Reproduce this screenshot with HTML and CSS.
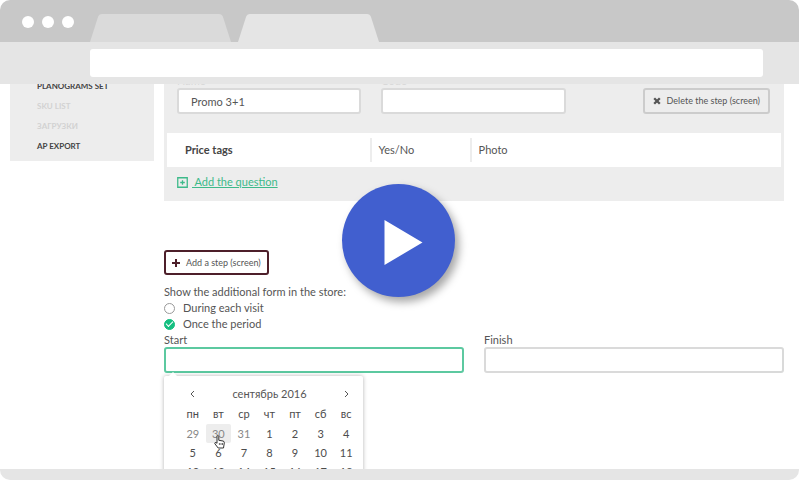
FILE: index.html
```html
<!DOCTYPE html>
<html lang="en">
<head>
<meta charset="utf-8">
<title>Step editor</title>
<link rel="stylesheet" href="styles.css">
</head>
<body>
<div class="window">
  <header class="titlebar">
    <div class="dots"><span></span><span></span><span></span></div>
    <svg class="tab tab-back" viewBox="0 0 142 28" aria-hidden="true"><path d="M0 28 L8 3 Q9 0 12 0 H129 Q132 0 133 3 L141 28Z"/></svg>
    <svg class="tab" viewBox="0 0 142 28" aria-hidden="true"><path d="M0 28 L8 3 Q9 0 12 0 H129 Q132 0 133 3 L141 28Z"/></svg>
  </header>
  <div class="toolbar"><input class="address" type="text" aria-label="Address"></div>

  <div class="viewport">
    <div class="page">
      <nav class="sidebar">
        <a href="#planograms">PLANOGRAMS SET</a>
        <a href="#sku" class="muted">SKU LIST</a>
        <a href="#uploads" class="muted">ЗАГРУЗКИ</a>
        <a href="#export">AP EXPORT</a>
      </nav>

      <main class="main">
        <section class="panel">
          <div class="step-row">
            <div class="step-field">
              <label for="name">Name</label>
              <input class="box" id="name" type="text" value="Promo 3+1">
            </div>
            <div class="step-field">
              <label for="code">Code</label>
              <input class="box" id="code" type="text">
            </div>
            <button class="delete" type="button">
              <svg width="8" height="8" viewBox="0 0 8 8" aria-hidden="true"><path d="M1.2 1.2 6.8 6.8M6.8 1.2 1.2 6.8" stroke="currentColor" stroke-width="2.3"/></svg>
              Delete the step (screen)
            </button>
          </div>
          <table class="questions">
            <tr>
              <th scope="row">Price tags</th>
              <td class="kind"><span>Yes/No</span></td>
              <td><span>Photo</span></td>
            </tr>
          </table>
          <a class="add-question" href="#add">
            <svg width="11" height="11" viewBox="0 0 11 11" aria-hidden="true"><path d="M.75 .75H10.25V10.25H.75ZM5.5 3.2V7.8M3.2 5.5H7.8" fill="none" stroke="currentColor" stroke-width="1.3"/></svg>
            <span>&nbsp;Add the question</span>
          </a>
        </section>

        <button class="add-step" type="button">
          <svg width="8" height="8" viewBox="0 0 8 8" aria-hidden="true"><path d="M4 0V8M0 4H8" stroke="currentColor" stroke-width="2"/></svg>
          Add a step (screen)
        </button>

        <fieldset class="schedule">
          <legend>Show the additional form in the store:</legend>
          <label class="option"><input type="radio" name="when">During each visit</label>
          <label class="option"><input type="radio" name="when" checked>Once the period</label>
        </fieldset>

        <div class="dates">
          <div class="date-field">
            <label for="start">Start</label>
            <input class="box active" id="start" type="text">
            <div class="calendar">
              <div class="month">
                <button type="button" aria-label="Previous month"><svg width="5" height="8" viewBox="0 0 5 8"><path d="M4 1 1 4 4 7" fill="none" stroke="currentColor"/></svg></button>
                <span>сентябрь 2016</span>
                <button type="button" aria-label="Next month"><svg width="5" height="8" viewBox="0 0 5 8"><path d="M1 1 4 4 1 7" fill="none" stroke="currentColor"/></svg></button>
              </div>
              <table class="days">
                <thead><tr><th>пн</th><th>вт</th><th>ср</th><th>чт</th><th>пт</th><th>сб</th><th>вс</th></tr></thead>
                <tbody>
                  <tr><td class="other">29</td><td class="other hover">30<svg class="hand" width="11" height="14" viewBox="0 0 11 14" aria-hidden="true"><path d="M3 8.3V1.6Q3 .6 3.9 .6T4.8 1.6V5.3L9 6Q10.4 6.3 10.3 7.8L9.5 13H4.2L.9 8.8Q.4 7.9 1.2 7.5T3 8.3Z" fill="#fff" stroke="#333"/><path d="M5.4 8V10M7 8V10M8.5 8V10" stroke="#444" stroke-width=".8"/></svg></td><td class="other">31</td><td>1</td><td>2</td><td>3</td><td>4</td></tr>
                  <tr><td>5</td><td>6</td><td>7</td><td>8</td><td>9</td><td>10</td><td>11</td></tr>
                  <tr><td>12</td><td>13</td><td>14</td><td>15</td><td>16</td><td>17</td><td>18</td></tr>
                </tbody>
              </table>
            </div>
          </div>
          <div class="date-field">
            <label for="finish">Finish</label>
            <input class="box" id="finish" type="text">
          </div>
        </div>
      </main>
    </div>
  </div>
  <footer class="bottom"></footer>

  <button class="play" type="button" aria-label="Play video">
    <svg viewBox="0 0 113 113" aria-hidden="true"><path d="M42.5 36 80.5 58.5 42.5 81Z" fill="#fff"/></svg>
  </button>
</div>
</body>
</html>
```
FILE: styles.css
```css
* { box-sizing: border-box; }

body {
  margin: 0;
  background: #fff;
  color: #555;
  font: 11px/16px Lato, "Liberation Sans", sans-serif;
}

input, button { font: inherit; color: inherit; margin: 0; }
a { color: inherit; text-decoration: none; }
svg { display: block; }

.window {
  position: relative;
  display: flex;
  flex-direction: column;
  height: 100vh;
  border-radius: 10px;
  overflow: hidden;
}

/* Browser frame */
.titlebar {
  display: flex;
  align-items: flex-end;
  height: 42px;
  padding-left: 22px;
  background: #c8c8c8;
}
.dots { display: flex; gap: 8px; margin-right: 16px; padding-bottom: 14px; }
.dots span { width: 12px; height: 12px; border-radius: 50%; background: #fff; }
.tab { width: 142px; height: 28px; margin-right: 6px; fill: #e5e5e5; }
.tab-back { fill: #dadada; }
.toolbar { height: 42px; padding: 7px 36px 7px 90px; background: #e5e5e5; }
.address {
  display: block;
  width: 100%;
  height: 28px;
  padding: 0 10px;
  border: 0;
  border-radius: 3px;
  background: #fff;
}
.viewport { flex: 1; min-height: 0; overflow: hidden; }
.bottom { height: 11px; background: #e5e5e5; }

/* Page, scrolled slightly past its top */
.page {
  display: flex;
  align-items: flex-start;
  gap: 10px;
  margin-top: -8px;
  padding: 0 15px 0 10px;
}
.sidebar {
  display: flex;
  flex-direction: column;
  width: 144px;
  padding: 0 27px 5px;
  background: #ededed;
  color: #444;
  font-size: 8px;
  font-weight: 700;
  line-height: 20px;
}
.sidebar .muted { color: #d2d2d2; }
.main { flex: 1; }

.panel { padding: 0 3px 11px; background: #ededed; }
.step-row {
  display: grid;
  grid-template-columns: 1fr 1fr auto;
  align-items: end;
  column-gap: 20px;
  padding: 0 11px 19px 10px;
}
.step-field label { display: block; height: 12px; color: #d8d8d8; line-height: 10px; }
.box {
  display: block;
  width: 100%;
  height: 26px;
  padding: 0 12px;
  border: 2px solid #dadada;
  border-radius: 3px;
  background: #fff;
  outline: 0;
}
.box.active { border-color: #5cc9a0; }

.delete, .add-step {
  display: flex;
  align-items: center;
  gap: 6px;
  border: 2px solid #ccc;
  border-radius: 3px;
  background: none;
  font-size: 9px;
  white-space: nowrap;
}
.delete { height: 26px; margin-left: 57px; padding: 0 8px; }

.questions { width: 100%; border-collapse: collapse; background: #fff; table-layout: fixed; }
.questions th, .questions td { height: 34px; padding: 0; text-align: left; }
.questions th { width: 33%; padding-left: 18px; color: #444; }
.questions .kind { width: 100px; }
.questions span {
  display: block;
  padding-left: 7px;
  border-left: 2px solid #ededed;
  line-height: 24px;
}

.add-question {
  display: flex;
  align-items: center;
  gap: 4px;
  width: max-content;
  margin: 7px 0 0 10px;
  color: #3dba8a;
}
.add-question span { text-decoration: underline; }

.add-step {
  height: 25px;
  margin: 49px 0 9px;
  padding: 0 6px;
  border-color: #4d1f2a;
}
.add-step svg { color: #4d1f2a; }

.schedule { margin: 0; padding: 0; border: 0; }
.schedule legend { padding: 0; }
.option { display: flex; align-items: center; gap: 8px; }
.option input {
  display: grid;
  place-items: center;
  appearance: none;
  width: 11px;
  height: 11px;
  border: 1px solid #999;
  border-radius: 50%;
}
.option input:checked { border-color: #14bf80; background: #14bf80; }
.option input:checked::before {
  content: "";
  width: 6px;
  height: 3px;
  margin-bottom: 2px;
  border: solid #fff;
  border-width: 0 0 1px 1px;
  transform: rotate(-45deg);
}

.dates { display: grid; grid-template-columns: 1fr 1fr; gap: 20px; }
.date-field { position: relative; }
.date-field label { display: block; line-height: 15px; }

/* Date picker popup */
.calendar {
  position: absolute;
  top: 44px;
  left: 0;
  width: 199px;
  padding: 8px 4px 8px 16px;
  border-radius: 2px;
  background: #fff;
  box-shadow: 0 0 4px rgba(0, 0, 0, .3);
}
.calendar::before {
  content: "";
  position: absolute;
  top: -4px;
  left: 4px;
  border: solid transparent;
  border-width: 0 5px 5px;
  border-bottom-color: #fff;
}
.month { display: flex; align-items: center; justify-content: space-between; height: 20px; }
.month button { width: 25px; height: 20px; padding: 0 10px; border: 0; background: none; }
.days { width: 100%; border-collapse: collapse; table-layout: fixed; }
.days th, .days td {
  position: relative;
  height: 19px;
  padding: 0;
  color: #4c4c4c;
  text-align: center;
  font-weight: 400;
}
.days th { height: 20px; }
.days .other { color: #888; }
.days .hover { border-radius: 2px; background: #ededed; }
.hand { position: absolute; top: 11px; left: 8px; z-index: 1; }

/* Video overlay */
.play {
  position: absolute;
  top: calc(50% - 56px);
  left: calc(50% - 58px);
  width: 113px;
  height: 113px;
  padding: 0;
  border: 0;
  border-radius: 50%;
  background: #415fcf;
  box-shadow: 4px 5px 8px rgba(0, 0, 0, .35);
}
```
